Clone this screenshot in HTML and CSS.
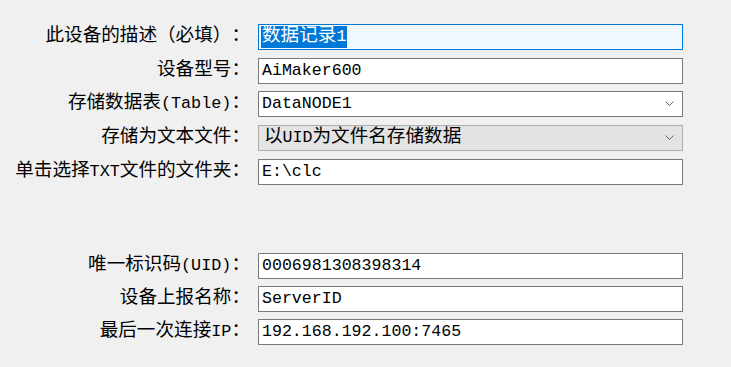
FILE: index.html
```html
<!DOCTYPE html>
<html lang="zh-CN">
<head>
    <meta charset="UTF-8">
    <meta name="viewport" content="width=device-width, initial-scale=1.0">
    <title>设备属性</title>
    <link rel="stylesheet" href="styles.css">
</head>
<body>
    <div class="device-form">
        <div class="form-group">
            <label class="form-label">此设备的描述（必填）：</label>
            <div class="field field-active"><span class="selected-text"><span class="cjk">数据记录</span>1</span></div>

            <label class="form-label">设备型号：</label>
            <div class="field">AiMaker600</div>

            <label class="form-label">存储数据表<span class="en">(Table)</span>：</label>
            <div class="field field-select">
                <span>DataNODE1</span>
                <svg class="chevron" width="9" height="6" viewBox="0 0 9 6"><path d="M0.5 0.5 L4.5 4.5 L8.5 0.5" fill="none" stroke="#606060" stroke-width="1"/></svg>
            </div>

            <label class="form-label">存储为文本文件：</label>
            <div class="field field-select field-disabled">
                <span><span class="cjk">以</span>UID<span class="cjk">为文件名存储数据</span></span>
                <svg class="chevron" width="9" height="6" viewBox="0 0 9 6"><path d="M0.5 0.5 L4.5 4.5 L8.5 0.5" fill="none" stroke="#606060" stroke-width="1"/></svg>
            </div>

            <label class="form-label">单击选择<span class="en">TXT</span>文件的文件夹：</label>
            <div class="field">E:\clc</div>
        </div>

        <div class="form-group form-group-info">
            <label class="form-label">唯一标识码<span class="en">(UID)</span>：</label>
            <div class="field">0006981308398314</div>

            <label class="form-label">设备上报名称：</label>
            <div class="field">ServerID</div>

            <label class="form-label">最后一次连接<span class="en">IP</span>：</label>
            <div class="field">192.168.192.100:7465</div>
        </div>
    </div>
</body>
</html>
```

FILE: styles.css
```css
* { margin: 0; padding: 0; box-sizing: border-box; }
body {
    font-family: 'Liberation Mono', 'Noto Sans CJK SC', monospace;
    font-size: 18.6px;
    text-spacing-trim: space-all;
    background-color: #f0f0f0;
    color: #000;
    min-height: 100vh;
}
.device-form { padding-top: 24px; }
.form-group {
    display: grid;
    grid-template-columns: 250px 425px;
    column-gap: 8px;
    row-gap: 7.7px;
    align-items: center;
}
.form-group-info { margin-top: 68.5px; row-gap: 7px; }
.form-label { text-align: right; white-space: nowrap; line-height: 26px; }
.en { font-size: 16.8px; }
.cjk { font-size: 18.6px; }
.field {
    height: 26px;
    border: 1px solid #7a7a7a;
    background-color: #fff;
    padding: 0 3px;
    font-size: 16.6px;
    line-height: 24px;
    white-space: nowrap;
    overflow: hidden;
}
.field-active { border-color: #0078d7; background-color: #eef8fd; padding-left: 2px; }
.selected-text { background-color: #0078d7; color: #fff; padding: 1px 1px 2px; }
.field-select { display: flex; justify-content: space-between; align-items: center; padding-right: 8px; }
.field-disabled { background-color: #e3e3e3; border-color: #adadad; padding-left: 5px; }
.chevron { flex-shrink: 0; }
```
